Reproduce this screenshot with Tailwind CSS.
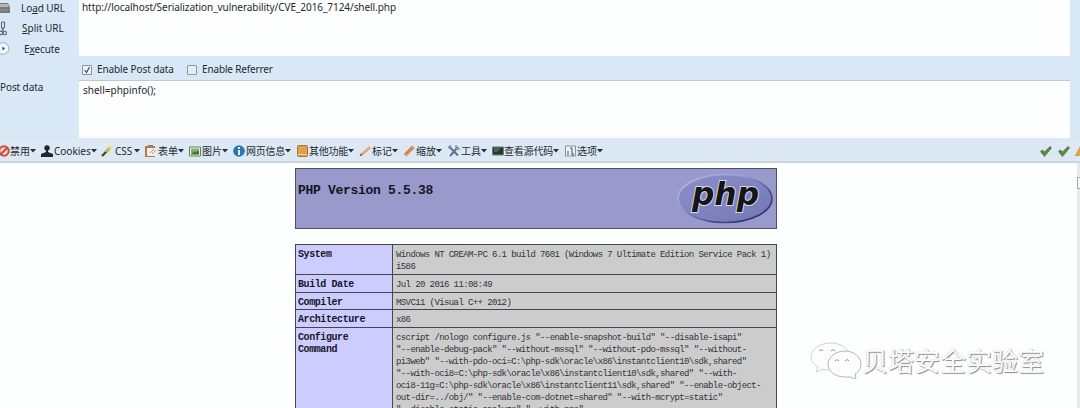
<!DOCTYPE html>
<html lang="zh">
<head>
<meta charset="utf-8">
<title>phpinfo()</title>
<script src="https://cdn.jsdelivr.net/npm/@tailwindcss/browser@4"></script>
</head>
<body class="w-[1080px] h-[408px] overflow-hidden bg-[#fdfefe] relative flex flex-col font-['Noto_Sans','Noto_Sans_CJK_SC',sans-serif] text-[10px] text-[#25282e]">
<section class="h-[138px] shrink-0 bg-[#d9e8f7] flex whitespace-nowrap">
  <div class="w-[79px] shrink-0 flex flex-col leading-[14px]">
    <div class="h-[18px] pt-px flex"><svg class="w-[21px] h-4" viewBox="0 0 21 16"><path d="M0 2h8l2 4v6H0z" fill="#777a7e"/><path d="M0 3h8l1 3H0z" fill="#b9b7b5"/><path d="M0 9h8" stroke="#bbb" stroke-dasharray="1 1"/></svg><span class="tracking-[-.08px]">Lo<u>a</u>d URL</span></div>
    <div class="h-[21px] pt-[3px] flex"><svg class="w-[22px] h-4" viewBox="0 0 22 16" fill="none" stroke="#596778" stroke-width="1.1"><path d="M1.500 1v5l2 4M4.500 1v5l-3 4M1.500 1h3"/><circle cx="1" cy="12" r="1.700"/><circle cx="4.800" cy="12" r="1.700"/></svg><span><u>S</u>plit URL</span></div>
    <div class="h-[36px] pt-[3px] flex"><svg class="w-[24px] h-4" viewBox="0 0 24 16"><circle cx="3" cy="6.500" r="5.800" fill="#f2f5fa" stroke="#929eac" stroke-width=".8"/><path d="M2.500 4.500l2.500 2-2.500 2z" fill="#39465a"/></svg><span class="tracking-[-.1px]">E<u>x</u>ecute</span></div>
    <div class="pt-[5px] tracking-[-.1px]">Post data</div>
  </div>
  <div class="w-[991px] flex flex-col">
    <div class="h-[56px] bg-[#fdfefe] pl-[3px] leading-[14px] tracking-[-.06px]">http://localhost/Serialization_vulnerability/CVE_2016_7124/shell.php</div>
    <div class="h-[25px] flex items-center pl-[3px] pt-[3px] border-b border-[#bccad7]">
      <svg class="w-[10px] h-[10px]" viewBox="0 0 10 10"><path d="M.5.500h9v9h-9z" fill="#f2f5f8" stroke="#8a9299"/><path d="M2.500 5l2 2.500L7.500 2" fill="none" stroke="#3b4557" stroke-width="1.200"/></svg>
      <span class="w-[91px] pl-[5px] tracking-[-.1px]">Enable Post data</span>
      <svg class="ml-[4px] w-[10px] h-[10px]" viewBox="0 0 10 10"><path d="M.5.500h9v9h-9z" fill="#e8edf2" stroke="#949ca3"/></svg>
      <span class="pl-[5px] tracking-[-.15px]">Enable Referrer</span>
    </div>
    <div class="h-[57px] bg-[#fdfefe] pl-[4px] pt-[2px] leading-[14px]">shell=phpinfo();</div>
  </div>
</section>

<nav class="h-[25px] shrink-0 bg-[#dce9f5] border-b-2 border-[#c9d6e0] flex items-center pt-[3px] whitespace-nowrap leading-[14px]">
  <div class="w-[41px] flex items-center"><svg class="w-[10px] h-3" viewBox="2 0 10 12"><circle cx="6" cy="6" r="4.700" fill="#f7d9d0" stroke="#cf4935" stroke-width="2"/><path d="M3 9l6-6" stroke="#cf4935" stroke-width="2"/></svg>禁用<svg class="w-[6px] h-3" viewBox="0 0 6 12"><path d="M0 4h6L3 7.500z" fill="#26313d"/></svg></div>
  <div class="w-[60px] flex items-center"><svg class="w-[13px] h-3" viewBox="0 0 13 12" fill="#20262d"><circle cx="6" cy="3" r="2.700"/><path d="M5 5h2v2l5 2v3H0V9l5-2z"/></svg><span class="w-[37px]">Cookies</span><svg class="w-[6px] h-3" viewBox="0 0 6 12"><path d="M0 4h6L3 7.500z" fill="#26313d"/></svg></div>
  <div class="w-[44px] flex items-center"><svg class="w-[14px] h-3" viewBox="0 0 14 12"><path d="M1 11l7-7" stroke="#44462c" stroke-width="2.400"/><path d="M5 7l4-4" stroke="#c2be36" stroke-width="2.500"/><path d="M9 0v5M6.500 2.500h5" stroke="#e4d764"/></svg><span class="w-[19px]">CSS</span><svg class="w-[6px] h-3" viewBox="0 0 6 12"><path d="M0 4h6L3 7.500z" fill="#26313d"/></svg></div>
  <div class="w-[44px] flex items-center"><svg class="w-[13px] h-3" viewBox="0 0 13 12"><path d="M0 1h10v11H0z" fill="#b87940"/><path d="M2 3h9v8H2z" fill="#f1eee9"/><path d="M3 0h5v2H3z" fill="#7d858c"/><path d="M5 8l4-4M7 9l4-4" stroke="#d29559"/></svg>表单<svg class="w-[6px] h-3" viewBox="0 0 6 12"><path d="M0 4h6L3 7.500z" fill="#26313d"/></svg></div>
  <div class="w-[44px] flex items-center"><svg class="w-[13px] h-3" viewBox="0 0 13 12"><path d="M.5 2h11v9H.5z" fill="#e6efe2" stroke="#66825c"/><path d="M2 3.500h8v6H2z" fill="#8cad6a"/><path d="M2 9.500l3-3 2 1 2-2 1 1v3z" fill="#417735"/></svg>图片<svg class="w-[6px] h-3" viewBox="0 0 6 12"><path d="M0 4h6L3 7.500z" fill="#26313d"/></svg></div>
  <div class="w-[64px] flex items-center"><svg class="w-[13px] h-3" viewBox="0 0 13 12"><circle cx="6" cy="6" r="5.800" fill="#2c75b0"/><path d="M6 2v2M6 5v5" stroke="white" stroke-width="1.800"/></svg><span class="w-[39px] tracking-[-.25px]">网页信息</span><svg class="w-[6px] h-3" viewBox="0 0 6 12"><path d="M0 4h6L3 7.500z" fill="#26313d"/></svg></div>
  <div class="w-[62px] flex items-center"><svg class="w-[12px] h-3" viewBox="0 0 12 12"><rect x=".5" y=".5" width="10" height="11" rx="1" fill="#e0a04a" stroke="#a77336"/><path d="M1 9.500h9" stroke="#f1cf98"/></svg><span class="w-[39px] tracking-[-.25px]">其他功能</span><svg class="w-[6px] h-3" viewBox="0 0 6 12"><path d="M0 4h6L3 7.500z" fill="#26313d"/></svg></div>
  <div class="w-[44px] flex items-center"><svg class="w-[13px] h-3" viewBox="0 0 13 12"><path d="M1 11l1-3 8-7 2 2-8 7z" fill="#dda061"/><path d="M3 8l8-7" stroke="#f0cfaa"/><path d="M.5 11.500l1.500-3 1.500 1.500z" fill="#67584a"/></svg>标记<svg class="w-[6px] h-3" viewBox="0 0 6 12"><path d="M0 4h6L3 7.500z" fill="#26313d"/></svg></div>
  <div class="w-[45px] flex items-center"><svg class="w-[13px] h-3" viewBox="0 0 13 12"><path d="M.5 9L9 .5l3 2.500-8.500 8.500z" fill="#d5975a"/><path d="M3 7l2 1M5 5l2 1M7 3l2 1" stroke="#966137" stroke-width=".7"/></svg>缩放<svg class="w-[6px] h-3" viewBox="0 0 6 12"><path d="M0 4h6L3 7.500z" fill="#26313d"/></svg></div>
  <div class="w-[44px] flex items-center"><svg class="w-[13px] h-3" viewBox="0 0 13 12" fill="none"><path d="M2 11l8-9M1 1.500l2 2 7 7" stroke="#59728d" stroke-width="2"/><path d="M8 0v4h4M0 3l3-3" stroke="#8294a8" stroke-width="1.500"/></svg>工具<svg class="w-[6px] h-3" viewBox="0 0 6 12"><path d="M0 4h6L3 7.500z" fill="#26313d"/></svg></div>
  <div class="w-[73px] flex items-center"><svg class="w-[12px] h-3" viewBox="0 0 12 12"><path d="M.5 2h11v8H.5z" fill="#263c32" stroke="#6f7c79"/><path d="M2 4h6M2 6h4" stroke="#68906c"/></svg><span class="w-[49px] tracking-[-.2px]">查看源代码</span><svg class="w-[6px] h-3" viewBox="0 0 6 12"><path d="M0 4h6L3 7.500z" fill="#26313d"/></svg></div>
  <div class="flex items-center"><svg class="w-[12px] h-3" viewBox="0 0 12 12"><path d="M.5 1h10v10H.5z" fill="#edf1f4" stroke="#899198"/><path d="M3 10V6M5 3h2v7M8 8v3" stroke="#4c535a" fill="none"/></svg>选项<svg class="w-[6px] h-3" viewBox="0 0 6 12"><path d="M0 4h6L3 7.500z" fill="#26313d"/></svg></div>
  <svg class="ml-auto w-[40px] h-3" viewBox="0 0 40 12"><path d="M0 6.500l2.500-2 2 2L10 1l2 2-7.500 9z" fill="#588849"/><path d="M18 6.500l2.500-2 2 2L28 1l2 2-7.500 9z" fill="#588849"/><path d="M34.500 11l5.500-10v10z" fill="#e2a243"/></svg>
</nav>

<main class="h-[245px] flex flex-col items-start pl-[295px] pt-[5px] overflow-hidden font-['Liberation_Mono',monospace] relative">
  <header class="w-[482px] h-[61px] shrink-0 border border-[#4d4d66] bg-[#9999cc] flex justify-between pl-[2px] pr-[3px] pt-[4px]">
    <h1 class="pt-[10px] font-['Liberation_Mono'] font-bold text-[13px] leading-4 tracking-[-.3px] text-[#15151f]">PHP Version 5.5.38</h1>
    <svg class="w-[96px] h-[51px]" viewBox="0 0 96 51">
      <defs><linearGradient id="rim" x1="0" y1="0" x2="1" y2="1"><stop offset="0" stop-color="#b8bce4"/><stop offset=".35" stop-color="#9aa0d4"/><stop offset=".65" stop-color="#4b5092"/><stop offset="1" stop-color="#1c1f55"/></linearGradient><linearGradient id="face" x1="0" y1="0" x2="1" y2="1"><stop offset="0" stop-color="#8b90ca"/><stop offset="1" stop-color="#7377b4"/></linearGradient></defs>
      <ellipse cx="48" cy="25.500" rx="47" ry="24" fill="url(#face)" stroke="url(#rim)" stroke-width="1.700"/>
      <text x="15" y="31.500" textLength="67" lengthAdjust="spacingAndGlyphs" font-family="DejaVu Sans" font-style="italic" font-weight="bold" font-size="32" fill="#15151a" stroke="#d9d9e2" stroke-width="2" paint-order="stroke">php</text>
    </svg>
  </header>
  <div class="mt-[15px] w-[482px] h-[190px] shrink-0 grid grid-cols-[97px_1fr] grid-rows-[30px_18px_17px_18px_100px] border border-[#45454b] bg-[#cccccc] text-[9px] leading-[12px] tracking-[-.6px] whitespace-pre text-[#33333a]
    [&>b]:bg-[#ccccff] [&>b]:text-[10px] [&>b]:tracking-[-.42px] [&>b]:text-[#17172a] [&>b]:border-r [&>b]:border-b [&>b]:border-[#45454b] [&>b]:pl-[2px] [&>b]:pt-[4px] [&>p]:border-b [&>p]:border-[#45454b] [&>p]:pl-[3px] [&>p]:pt-[4px]">
    <b>System</b><p>Windows NT CREAM-PC 6.1 build 7601 (Windows 7 Ultimate Edition Service Pack 1)
i586</p>
    <b>Build Date</b><p>Jul 20 2016 11:08:49</p>
    <b>Compiler</b><p>MSVC11 (Visual C++ 2012)</p>
    <b>Architecture</b><p>x86</p>
    <b>Configure
Command</b><p>cscript /nologo configure.js "--enable-snapshot-build" "--disable-isapi"
"--enable-debug-pack" "--without-mssql" "--without-pdo-mssql" "--without-
pi3web" "--with-pdo-oci=C:\php-sdk\oracle\x86\instantclient10\sdk,shared"
"--with-oci8=C:\php-sdk\oracle\x86\instantclient10\sdk,shared" "--with-
oci8-11g=C:\php-sdk\oracle\x86\instantclient11\sdk,shared" "--enable-object-
out-dir=../obj/" "--enable-com-dotnet=shared" "--with-mcrypt=static"
"--disable-static-analyze" "--with-pgo"</p>
  </div>
  <aside class="absolute right-0 top-0 w-[3px] h-full bg-[#e8e9eb]"><i class="block mt-[14px] h-[12px] border border-r-0 border-[#a4a7ab] bg-[#f7f7f7]"></i></aside>
</main>

<div class="absolute left-[810px] top-[341px] flex items-center whitespace-nowrap">
  <svg class="w-[52px] h-[38px]" viewBox="0 0 52 38" fill="#fdfdfe" stroke="#b5b5ba" stroke-width="1">
    <path d="M21 2C10 2 1 8 1 16c0 4 3 8 7 10l-2 5 7-3c3 1 5 1 8 1 11 0 19-6 19-13S32 2 21 2z" stroke="#d2d2d6"/>
    <path d="M35 12c-9 0-17 6-17 13 0 8 8 13 17 13h5l6 2-1-5c4-2 6-6 6-10 0-7-7-13-16-13z" transform="translate(0 -2)"/>
    <path d="M9 10q2-3 4 0M21 10q2-3 4 0M25 20q2-3 4 0M35 20q2-3 4 0" fill="none" stroke="#96969c"/>
  </svg>
  <span class="font-['Noto_Sans_CJK_SC',sans-serif] text-[26px] leading-[36px] text-[#fdfdfe] [text-shadow:1px_1px_1px_#8a8a90,0_0_1px_#b8b8bc]">贝塔安全实验室</span>
</div>
</body>
</html>
